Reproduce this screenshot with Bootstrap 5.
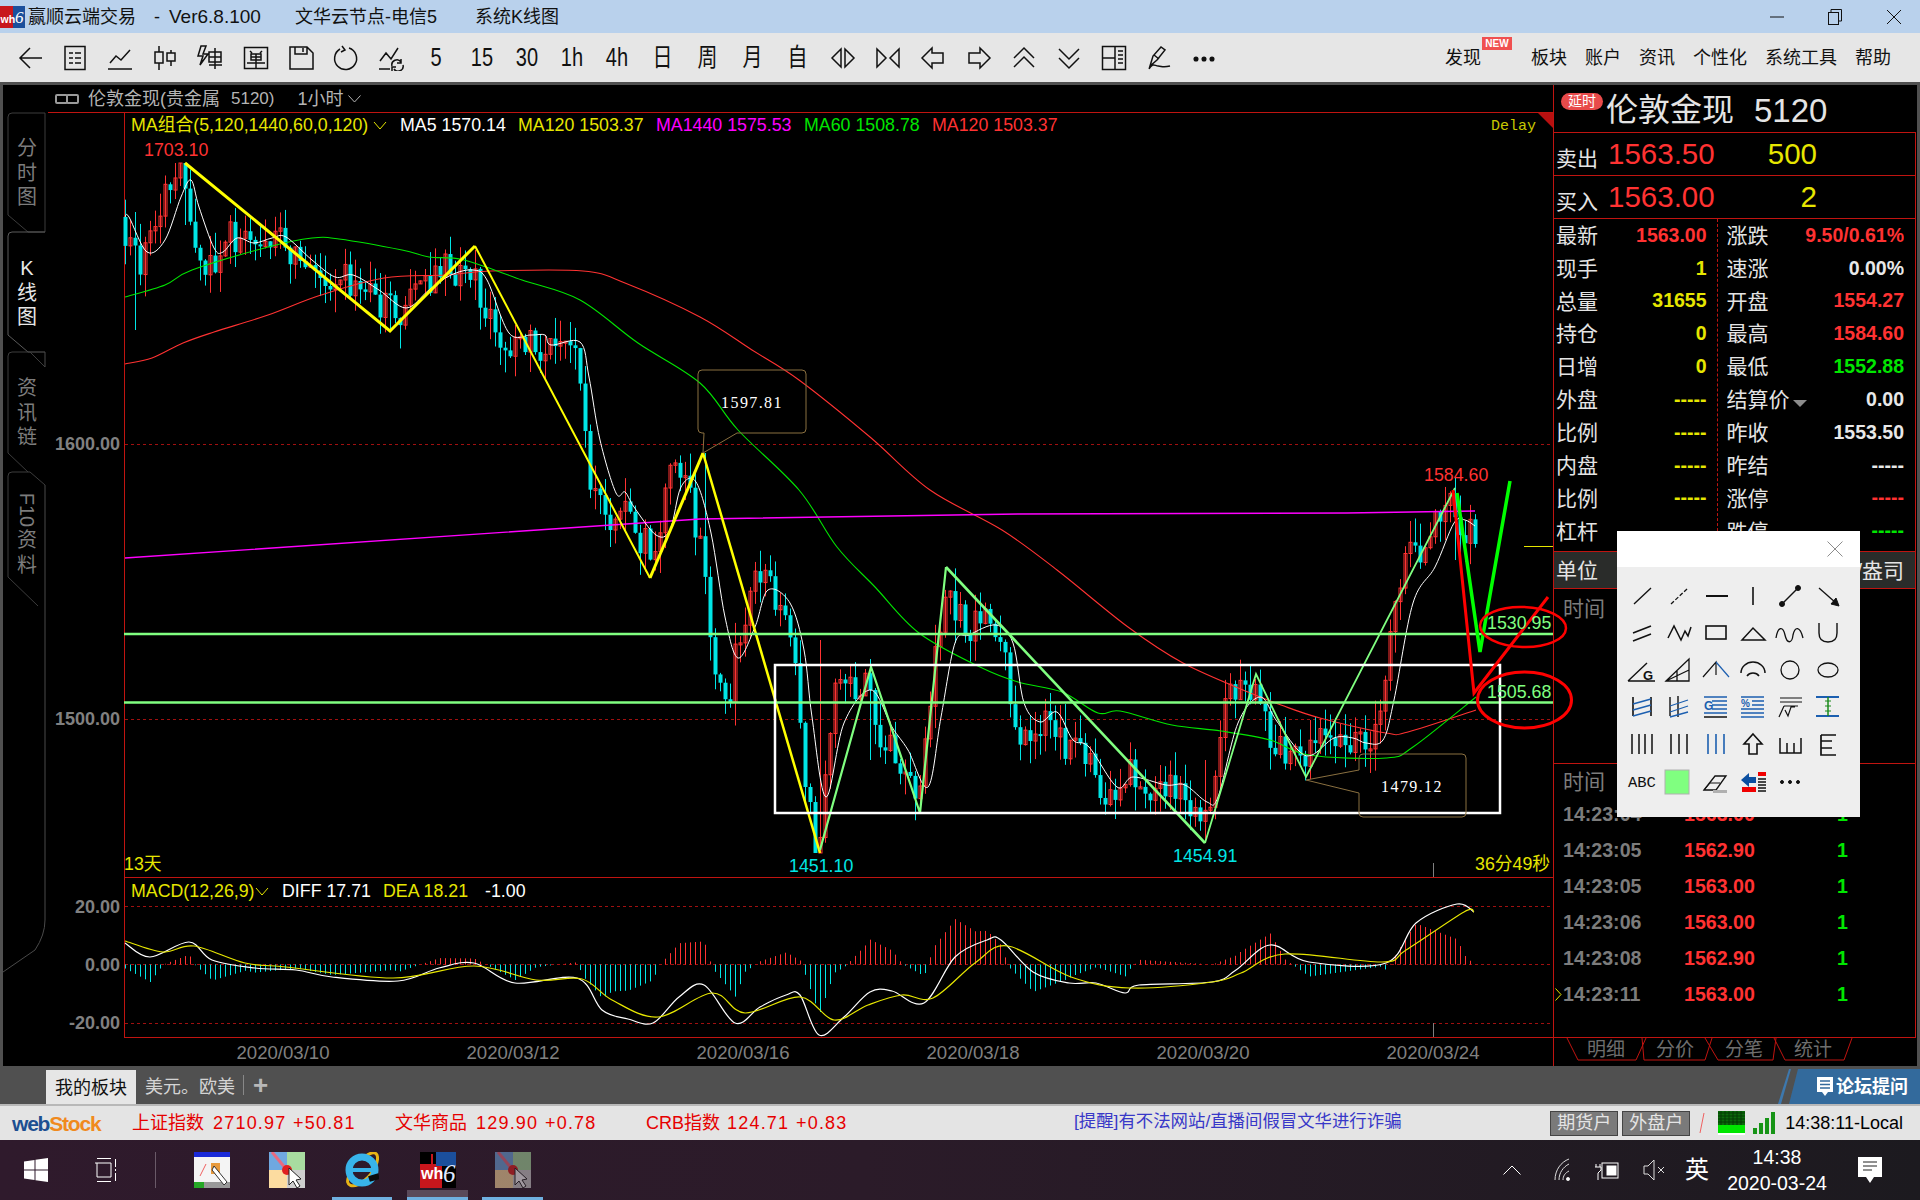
<!doctype html>
<html lang="zh-CN">
<head>
  <meta charset="utf-8" />
  <meta name="viewport" content="width=device-width, initial-scale=1" />
  <title>赢顺云端交易</title>
  <link href="https://cdn.jsdelivr.net/npm/bootstrap@5.3.6/dist/css/bootstrap.min.css" rel="stylesheet" />
  <style>
    body {
      width: 1920px;
      height: 1200px;
      overflow: hidden;
      background: #505050;
      font-family: "Liberation Sans", "Noto Sans CJK SC", sans-serif;
      font-size: 18px;
      line-height: 1;
    }
    svg { display: block; }

    /* title bar and toolbar */
    .title-bar { height: 33px; background: #b9d1ec; color: #111; }
    .title-bar .logo-wrap { width: 28px; }
    .tool-bar { height: 49px; background: #e6e6e6; color: #111; padding-left: 7px; }
    .tb-slot { width: 45.2px; display: flex; justify-content: center; align-items: center; font-size: 25px; }
    .tb-slot span { display: inline-block; transform: scaleX(.8); }
    .menu-side { gap: 18px; padding-right: 29px; }
    .new-tag { position: absolute; left: 37px; top: -12px; width: 30px; height: 13px; background: #f05050; color: #fff; font-size: 10px; font-weight: 700; text-align: center; line-height: 13px; }
    .gray-gap { height: 3px; background: #505050; }

    /* main area */
    .work-area { height: 981px; background: #000; border-left: 3px solid #505050; border-right: 3px solid #505050; }
    .side-rail { width: 45px; flex: none; }
    .chart-col { width: 1505px; flex: none; position: relative; z-index: 2; }
    .chart-head { height: 27px; color: #b4b4b4; padding-left: 7px; font-size: 18px; }
    .chart-svg { overflow: visible; }
    .chart-svg text { font-family: "Liberation Sans", "Noto Sans CJK SC", sans-serif; dominant-baseline: central; }
    .tx-ma { font-size: 17.8px; }
    .tx-axis { font-size: 18px; font-weight: 700; }
    .tx-date { font-size: 18.6px; }
    .tx-mono { font-family: "Liberation Mono", monospace !important; font-size: 15px; }
    .tx-call { font-family: "Liberation Serif", serif !important; font-size: 16px; letter-spacing: 1.4px; }

    /* quote panel */
    .quote-panel { width: 364px; flex: none; position: relative; border-left: 1px solid #c01410; color: #e4e4e4; }
    .qp-head { height: 47px; padding: 3px 0 0 7px; }
    .delay-tag { width: 42px; height: 17px; border-radius: 9px; background: #e84a4a; color: #fff; font-size: 14px; text-align: center; line-height: 17px; margin-top: -17px; }
    .qp-name { font-size: 32px; margin-left: 3px; }
    .qp-code { font-size: 33px; margin-left: 20px; }
    .qp-sec { width: 362px; border-right: 1px solid #c01410; border-top: 1px solid #c01410; }
    .qp-quote { height: 43px; padding-left: 2px; }
    .qp-quote .lbl { font-size: 21px; width: 52px; margin-top: 9px; }
    .qp-quote .prc { font-size: 29.5px; width: 153px; color: #ff3232; }
    .qp-quote .vol { font-size: 29.5px; width: 56px; color: #e6e600; text-align: right; }
    .info-grid { height: 333px; }
    .info-left { width: 164px; padding: 0 10px 0 2px; border-right: 1px dashed #c01410; }
    .info-right { width: 198px; padding: 0 11px 0 9px; }
    .info-row { height: 32.85px; font-size: 21px; overflow: hidden; }
    .info-row b { font-size: 19.5px; }
    .c-red { color: #ff3232; }
    .c-yel { color: #e6e600; }
    .c-grn { color: #00e600; }
    .c-wht { color: #e8e8e8; }
    .drop-tri { width: 0; height: 0; display: inline-block; border-left: 7px solid transparent; border-right: 7px solid transparent; border-top: 7px solid #8c8c8c; margin-left: 3px; vertical-align: 0; }
    .unit-row { height: 37px; background: #2a2c2a; padding: 0 11px 0 2px; font-size: 21px; }
    .time-sec { height: 175px; color: #7c7c7c; font-size: 21px; padding: 9px 0 0 9px; }
    .tick-sec { height: 274px; }
    .tick-head { height: 33px; color: #7c7c7c; font-size: 21px; padding: 2px 0 0 9px; }
    .tick-row { height: 36px; padding-left: 9px; font-size: 19.6px; font-weight: 700; position: relative; }
    .tick-row .tm { width: 121px; color: #7c7c7c; }
    .tick-row .pr { width: 70px; color: #ff3232; }
    .tick-row .nm { width: 94px; color: #00e600; text-align: right; }
    .tick-cur { position: absolute; left: 1px; top: 11px; }
    .tab-strip { border-top: 1px solid #c01410; width: 362px; }

    /* drawing tools popup */
    .tool-pop { position: absolute; left: 63px; top: 446px; width: 243px; height: 286px; background: #eeeeee; z-index: 5; }
    .tool-pop-top { height: 36px; background: #fff; }
    .tool-grid { display: grid; grid-template-columns: repeat(6, 37.2px); grid-auto-rows: 37.2px; padding: 10px 0 0 6px; }
    .tool-grid > div { display: flex; align-items: center; justify-content: center; }

    /* bottom strips */
    .sheet-strip { height: 38px; background: #505050; color: #d4d4d4; padding-left: 46px; }
    .sheet-on { width: 90px; height: 34px; margin-top: 4px; background: #e6e6e6; color: #111; text-align: center; line-height: 37px; }
    .sheet-off { margin-left: 9px; margin-top: 4px; padding-top: 4px; }
    .sheet-sep { width: 1px; height: 20px; background: #888; margin: 9px 0 0 8px; }
    .sheet-plus { color: #b8b8b8; font-size: 26px; font-weight: 700; margin: 6px 0 0 9px; }
    .forum-sliver { width: 14px; height: 35px; margin-top: 3px; margin-right: -3px; background: #3d78ae; clip-path: polygon(11px 0, 13px 0, 3px 100%, 0 100%); }
    .forum-chip { width: 131px; height: 35px; margin-top: 3px; background: #336a9c; clip-path: polygon(9px 0, 100% 0, 100% 100%, 0 100%); color: #fff; padding-left: 28px; gap: 3px; font-weight: 700; }
    .status-bar { height: 36px; border-top: 2px solid #b8b8b8; background: #e4e4e4; position: relative; }
    .stock-logo { padding-left: 12px; font-size: 21px; font-weight: 700; letter-spacing: -1.2px; }
    .idx { color: #e60000; font-size: 18px; }
    .idx-num { letter-spacing: 1.2px; }
    .notice { color: #3838c8; font-size: 17.4px; margin-left: 1074px; margin-top: -3px; }
    .st-btn { height: 25px; background: #7a7a7a; border: 1px solid #444; color: #e4e4e4; font-size: 18px; line-height: 23px; text-align: center; }
    .clock-local { font-size: 18px; color: #000; }
    .task-bar { height: 60px; background: linear-gradient(90deg, #2f1a2c 0%, #2b1b29 45%, #1c1a1f 100%); color: #fff; position: relative; }
    .tray-time { width: 110px; text-align: center; font-size: 19.5px; line-height: 26px; }
    .run-mark { position: absolute; bottom: 0; height: 3px; background: #6fb0e0; }
    .run-glow { position: absolute; bottom: 3px; left: 407px; width: 61px; height: 7px; background: #5a4a5a; }
  </style>
</head>
<body>
  <div class="title-bar d-flex align-items-center">
    <div class="logo-wrap">
      <svg width="25" height="22" viewBox="0 0 25 22"><rect width="13" height="22" fill="#c8161c"/><rect x="13" width="12" height="22" fill="#1b4f9c"/><text x=".5" y="17" font-size="10.5" font-weight="700" fill="#fff" font-family="Liberation Sans">wh</text><text x="15" y="17" font-size="17" font-style="italic" fill="#fff" font-family="Liberation Serif">6</text></svg>
    </div>
    <span>赢顺云端交易</span><span style="margin-left:18px">-</span><span style="margin-left:9px;font-size:19px">Ver6.8.100</span>
    <span style="margin-left:34px">文华云节点-电信5</span><span style="margin-left:38px">系统K线图</span>
    <div class="d-flex align-items-center ms-auto" style="padding-right:18px;gap:44px">
      <svg width="14" height="14" viewBox="0 0 14 14"><path d="M0 7H14" stroke="#111"/></svg>
      <svg width="14" height="16" viewBox="0 0 14 16" fill="none" stroke="#111"><rect x=".5" y="3.5" width="10" height="12"/><path d="M3 3V.5H13.5V12H11"/></svg>
      <svg width="16" height="16" viewBox="0 0 16 16" stroke="#111"><path d="M1 1L15 15M15 1L1 15"/></svg>
    </div>
  </div>

  <div class="tool-bar d-flex align-items-center">
    <div class="d-flex align-items-center" id="toolSlots"></div>
    <div class="menu-side d-flex align-items-center ms-auto">
      <span class="position-relative" style="margin-right:32px">发现<span class="new-tag">NEW</span></span>
      <span>板块</span><span>账户</span><span>资讯</span><span>个性化</span><span>系统工具</span><span>帮助</span>
    </div>
  </div>
  <div class="gray-gap"></div>

  <div class="work-area d-flex">
    <div class="side-rail">
      <svg width="45" height="981" viewBox="3 85 45 981" fill="none">
        <path d="M45 232H28L8 215V117Q8 113 12 113H45V232" stroke="#3c3c3c"/>
        <path d="M45 232H12Q8 232 8 236V335L28 352H45" stroke="#5a5a5a"/>
        <path d="M45 367L30 352H12Q8 352 8 356V453L28 472" stroke="#3c3c3c"/>
        <path d="M45 485L30 472H12Q8 472 8 476V577L38 606" stroke="#3c3c3c"/>
        <path d="M45 367V352M45 485V920Q45 935 35 950L3 972" stroke="#4a4a4a"/>
        <g font-size="20" font-family="Liberation Sans, Noto Sans CJK SC, sans-serif" text-anchor="middle" dominant-baseline="central" fill="#7c7c7c">
          <text x="27" y="148">分</text><text x="27" y="173">时</text><text x="27" y="197">图</text>
          <g fill="#e8e8e8"><text x="27" y="268">K</text><text x="27" y="293">线</text><text x="27" y="317">图</text></g>
          <text x="27" y="388">资</text><text x="27" y="413">讯</text><text x="27" y="437">链</text>
          <text x="27" y="510" transform="rotate(90 27 510)">F10</text><text x="27" y="540">资</text><text x="27" y="565">料</text>
        </g>
      </svg>
    </div>

    <div class="chart-col">
      <div class="chart-head d-flex align-items-center">
        <svg width="24" height="10" viewBox="0 0 24 10" fill="none" stroke="#9a9a9a" stroke-width="2"><rect x="1" y="1" width="11" height="8" rx="1"/><rect x="12" y="1" width="11" height="8" rx="1"/></svg>
        <span style="margin-left:9px">伦敦金现(贵金属</span><span style="margin-left:11px;font-size:17px">5120)</span>
        <span style="margin-left:23px">1小时</span>
        <svg class="ms-1" width="13" height="8" viewBox="0 0 13 8" fill="none" stroke="#b4b4b4"><path d="M.5 .5L6.5 7L12.5 .5"/></svg>
      </div>
      <svg class="chart-svg" id="chart" width="1505" height="954" viewBox="48 112 1505 954"></svg>
    </div>

    <div class="quote-panel">
      <div class="qp-head d-flex align-items-center">
        <span class="delay-tag">延时</span><span class="qp-name">伦敦金现</span><span class="qp-code">5120</span>
      </div>
      <div class="qp-sec qp-quote d-flex align-items-center"><span class="lbl">卖出</span><span class="prc">1563.50</span><span class="vol">500</span></div>
      <div class="qp-sec qp-quote d-flex align-items-center"><span class="lbl">买入</span><span class="prc">1563.00</span><span class="vol">2</span></div>
      <div class="qp-sec info-grid d-flex">
        <div class="info-left" id="infoLeft"></div>
        <div class="info-right" id="infoRight"></div>
      </div>
      <div class="qp-sec unit-row d-flex align-items-center justify-content-between"><span>单位</span><span>美元/盎司</span></div>
      <div class="qp-sec time-sec">时间</div>
      <div class="qp-sec tick-sec" id="tickSec"></div>
      <div class="tab-strip">
        <svg width="362" height="29" viewBox="1554 1037 362 29" fill="none">
          <g stroke="#c01410">
            <path d="M1567 1037L1578 1059H1636L1646 1037"/>
            <path d="M1642 1037L1644 1059H1705L1712 1037"/>
            <path d="M1705 1037L1718 1059H1773L1776 1037"/>
            <path d="M1774 1037L1785 1059H1844L1852 1037"/>
          </g>
          <g font-size="19" fill="#6e6e6e" text-anchor="middle" dominant-baseline="central" font-family="Liberation Sans, Noto Sans CJK SC, sans-serif">
            <text x="1606" y="1048">明细</text><text x="1675" y="1048">分价</text><text x="1744" y="1048">分笔</text><text x="1813" y="1048">统计</text>
          </g>
        </svg>
      </div>

      <div class="tool-pop">
        <div class="tool-pop-top d-flex justify-content-end align-items-center" style="padding-right:17px">
          <svg width="16" height="16" viewBox="0 0 16 16" stroke="#8c8c8c"><path d="M.5 .5L15.5 15.5M15.5 .5L.5 15.5"/></svg>
        </div>
        <div class="tool-grid" id="toolGrid"></div>
      </div>
    </div>
  </div>

  <div class="sheet-strip d-flex">
    <div class="sheet-on">我的板块</div>
    <div class="sheet-off d-flex align-items-center" style="height:30px">美元。欧美</div>
    <div class="sheet-sep"></div>
    <div class="sheet-plus">+</div>
    <div class="forum-sliver ms-auto"></div>
    <div class="forum-chip d-flex align-items-center">
      <svg width="16" height="20" viewBox="0 0 16 20"><path d="M0 0H16V15H11L8 19L5 15H0Z" fill="#fff"/><path d="M3 4H13M3 7.5H13M3 11H13" stroke="#336a9c" stroke-width="1.3"/></svg>
      <span>论坛提问</span>
    </div>
  </div>

  <div class="status-bar d-flex align-items-center">
    <div class="stock-logo" style="position:absolute;left:0"><span style="color:#1d4f91">web</span><span style="color:#f08a1d">Stock</span></div>
    <div class="idx" style="position:absolute;left:132px">上证指数</div>
    <div class="idx idx-num" style="position:absolute;left:213px">2710.97</div>
    <div class="idx idx-num" style="position:absolute;left:293px">+50.81</div>
    <div class="idx" style="position:absolute;left:395px">文华商品</div>
    <div class="idx idx-num" style="position:absolute;left:476px">129.90</div>
    <div class="idx idx-num" style="position:absolute;left:545px">+0.78</div>
    <div class="idx" style="position:absolute;left:646px">CRB指数</div>
    <div class="idx idx-num" style="position:absolute;left:727px">124.71</div>
    <div class="idx idx-num" style="position:absolute;left:796px">+0.83</div>
    <div class="notice">[提醒]有不法网站/直播间假冒文华进行诈骗</div>
    <div class="d-flex align-items-center ms-auto" style="padding-right:17px">
      <div class="st-btn" style="width:68px">期货户</div>
      <div class="st-btn" style="width:68px;margin-left:4px">外盘户</div>
      <svg class="ms-2" width="8" height="22" viewBox="0 0 8 22"><path d="M6 1L2 21" stroke="#f06060"/></svg>
      <svg style="margin-left:12px" width="27" height="24" viewBox="0 0 27 24"><rect width="27" height="24" fill="#fff"/><rect width="27" height="22" fill="#0a6a0a"/><rect y="14" width="27" height="8" fill="#00e600"/><path d="M0 2H27M0 5H27M0 8H27M0 11H27M3 0V14M7 0V14M11 0V14M15 0V14M19 0V14M23 0V14" stroke="#043a04"/></svg>
      <svg style="margin-left:8px" width="23" height="22" viewBox="0 0 23 22" fill="#169416"><rect y="16" width="4" height="6"/><rect x="6" y="11" width="4" height="11"/><rect x="12" y="6" width="4" height="16"/><rect x="18" width="4" height="22"/></svg>
      <span class="clock-local" style="margin-left:9px">14:38:11-Local</span>
    </div>
  </div>

  <div class="task-bar d-flex align-items-center" id="taskBar">
    <svg style="margin-left:24px" width="24" height="24" viewBox="0 0 24 24" fill="#fff"><path d="M0 3.5L10.5 2V11.5H0ZM11.5 1.8L24 0V11.5H11.5ZM0 12.5H10.5V22L0 20.5ZM11.5 12.5H24V24L11.5 22.2Z"/></svg>
    <svg style="margin-left:47px" width="24" height="24" viewBox="0 0 24 24" fill="none" stroke="#fff"><path d="M2 .5H16M2 23.5H16M2 5V19M2 5H16V19H2M2 5H0M20.5 1V9M20.5 11V13M20.5 15V23"/></svg>
    <svg style="margin-left:36px" width="1" height="36" viewBox="0 0 1 36"><path d="M.5 0V36" stroke="#6a5a68"/></svg>
    <!-- app 1 -->
    <svg style="margin-left:38px" width="36" height="36" viewBox="0 0 36 36"><rect width="36" height="34" fill="#f4f4f4"/><rect width="36" height="5" fill="#1a2ad8"/><rect x="0" y="30" width="36" height="6" fill="#999"/><rect x="0" y="30" width="10" height="6" fill="#26a826"/><path d="M6 24L12 12" stroke="#f06060"/><rect x="17" y="11" width="9" height="11" fill="#e89a3c"/><path d="M20 14L33 30L30 33L18 18Z" fill="#fff" stroke="#333"/></svg>
    <!-- app 2 -->
    <svg style="margin-left:39px" width="36" height="36" viewBox="0 0 36 36"><rect width="18" height="18" fill="#6fa8e0"/><rect x="18" width="18" height="18" fill="#a8dca0"/><rect y="18" width="18" height="18" fill="#fcdca0"/><rect x="18" y="18" width="18" height="18" fill="#cfcfcf"/><path d="M3 0L17 17" stroke="#e86a80" stroke-width="3"/><circle cx="18" cy="18" r="5" fill="#e02020"/><path d="M20 16V33L24 29L28 36L31 34L27 28L32 27Z" fill="#fff" stroke="#222"/></svg>
    <!-- IE -->
    <svg style="margin-left:40px" width="34" height="36" viewBox="0 0 34 36" fill="none"><path d="M4 24C-1 34 8 38 20 28C30 20 34 8 32 3C30 -1 24 1 20 5" stroke="#e8b416" stroke-width="3"/><ellipse cx="17" cy="18" rx="13" ry="13" stroke="#38b4ea" stroke-width="7"/><path d="M7 18H27" stroke="#38b4ea" stroke-width="4"/><path d="M24 27L34 24" stroke="#0c0c0c" stroke-width="6"/></svg>
    <!-- wh6 -->
    <svg style="margin-left:41px" width="36" height="36" viewBox="0 0 36 36"><rect width="36" height="36" fill="#000"/><rect y="12" width="22" height="24" fill="#c8161c"/><rect x="16" width="20" height="14" fill="#1b4f9c"/><path d="M12 2V12" stroke="#c8161c" stroke-width="2"/><text x="1" y="27" font-size="16" font-weight="700" fill="#fff" font-family="Liberation Sans">wh</text><text x="23" y="30" font-size="25" font-style="italic" fill="#dfe8ff" font-family="Liberation Serif">6</text></svg>
    <!-- app 2 again, dimmed -->
    <svg style="margin-left:39px;opacity:.55" width="36" height="36" viewBox="0 0 36 36"><rect width="18" height="18" fill="#6fa8e0"/><rect x="18" width="18" height="18" fill="#a8dca0"/><rect y="18" width="18" height="18" fill="#fcdca0"/><rect x="18" y="18" width="18" height="18" fill="#cfcfcf"/><path d="M3 0L17 17" stroke="#e86a80" stroke-width="3"/><circle cx="18" cy="18" r="5" fill="#e02020"/><path d="M20 16V33L24 29L28 36L31 34L27 28L32 27Z" fill="#fff" stroke="#222"/></svg>
    <div class="d-flex align-items-center ms-auto">
      <svg width="18" height="10" viewBox="0 0 18 10" fill="none" stroke="#fff"><path d="M.5 9.5L9 1L17.5 9.5"/></svg>
      <svg style="margin-left:32px" width="18" height="24" viewBox="0 0 18 24" fill="none" stroke="#ddd"><path d="M2 22C2 12 8 4 16 1M6 22C6 15 10 9 16 6M10 22C10 18 12 15 16 13"/><circle cx="15" cy="21" r="1.6" fill="#fff"/></svg>
      <svg style="margin-left:24px" width="24" height="20" viewBox="0 0 24 20" fill="none" stroke="#fff"><rect x="7" y="3" width="16" height="15"/><rect x="12" y="6" width="9" height="9" fill="#fff"/><path d="M1 4V7M5 4V7M0 7H6V10L3 13V20"/></svg>
      <svg style="margin-left:24px" width="22" height="24" viewBox="0 0 22 24" fill="none" stroke="#ddd"><path d="M1 8H5L11 2V22L5 16H1Z"/><path d="M15 9L21 15M21 9L15 15"/></svg>
      <span style="margin-left:20px;font-size:24px;color:#fff">英</span>
      <div class="tray-time" style="margin-left:13px"><div>14:38</div><div>2020-03-24</div></div>
      <svg style="margin-left:26px;margin-right:38px" width="24" height="26" viewBox="0 0 24 26"><path d="M0 0H24V20H16L12 26L8 20H0Z" fill="#fff"/><path d="M5 5H19M5 9H19M5 13H14" stroke="#222"/></svg>
    </div>
    <div class="run-glow"></div>
    <div class="run-mark" style="left:332px;width:60px"></div>
    <div class="run-mark" style="left:407px;width:61px"></div>
    <div class="run-mark" style="left:482px;width:61px"></div>
  </div>

  <script>
    // toolbar icons
    const toolbar = [
      '<path d="M13 3L3 13L13 23M3 13H25"/>',
      '<rect x="3" y="1.5" width="20" height="23"/><path d="M7 8H11M13 8H19M7 13H11M13 13H19M7 18H11M13 18H19"/>',
      '<path d="M1 24H25M3 18L9 11L14 15L23 5"/>',
      '<path d="M7 1V25M19 5V21"/><rect x="3" y="7" width="8" height="11" fill="#e6e6e6"/><rect x="15" y="8" width="8" height="8" fill="#e6e6e6"/>',
      '<path d="M9 1H4L1 11H6L3 20L11 9H6ZM12 7H24V17H12ZM18 3V24M12 12H24M12 20H25"/>',
      '<rect x="1.5" y="2.5" width="23" height="21"/><path d="M7 6L9 8M19 6L17 8M8 9H18V15H8ZM8 12H18M4 18H22M13 9V23"/>',
      '<path d="M2 2H19L25 8V24H2ZM7 2V9H19V2M15 3V7"/>',
      '<path d="M16 3A11 11 0 1 1 7 4M9 1L12 5L8 7"/>',
      '<path d="M1 24H12M2 16L8 8L13 14L20 3M14 21A5 5 0 0 1 23 17M25 20A5 5 0 0 1 16 24M23 14V18H19M14 26V22H18"/>',
      '5', '15', '30', '1h', '4h', '日', '周', '月', '自',
      '<path d="M11 4L2 13L11 22ZM15 4L24 13L15 22Z"/>',
      '<path d="M2 4L11 13L2 22ZM24 4L15 13L24 22Z"/>',
      '<path d="M12 3L2 13L12 23V18H23V8H12Z"/>',
      '<path d="M14 3L24 13L14 23V18H3V8H14Z"/>',
      '<path d="M3 13L13 3L23 13M3 22L13 12L23 22"/>',
      '<path d="M3 4L13 14L23 4M3 13L13 23L23 13"/>',
      '<rect x="1.5" y="1.5" width="23" height="23"/><path d="M1.5 13H14M14 1.5V24.5M17 6H22M17 10H22M17 14H22M17 18H22"/>',
      '<path d="M4 21L7 11L15 2L19 5L11 15L4 21ZM8 10L13 14M3 24C7 17 9 21 12 21C16 21 16 23 24 21"/>',
      '<circle cx="5" cy="14" r="1.8" fill="#111"/><circle cx="13" cy="14" r="1.8" fill="#111"/><circle cx="21" cy="14" r="1.8" fill="#111"/>'
    ];
    document.getElementById('toolSlots').innerHTML = toolbar.map(t =>
      t.charAt(0) === '<'
        ? `<div class="tb-slot"><svg width="26" height="26" viewBox="0 0 26 26" fill="none" stroke="#111" stroke-width="1.5">${t}</svg></div>`
        : `<div class="tb-slot"><span>${t}</span></div>`
    ).join('');

    // quote table
    const leftRows = [['最新','1563.00','c-red'],['现手','1','c-yel'],['总量','31655','c-yel'],['持仓','0','c-yel'],['日增','0','c-yel'],['外盘','-----','c-yel'],['比例','-----','c-yel'],['内盘','-----','c-yel'],['比例','-----','c-yel'],['杠杆','','c-yel']];
    const rightRows = [['涨跌','9.50/0.61%','c-red'],['速涨','0.00%','c-wht'],['开盘','1554.27','c-red'],['最高','1584.60','c-red'],['最低','1552.88','c-grn'],['结算价<span class="drop-tri"></span>','0.00','c-wht'],['昨收','1553.50','c-wht'],['昨结','-----','c-wht'],['涨停','-----','c-red'],['跌停','-----','c-grn']];
    const rowHtml = r => `<div class="info-row d-flex align-items-center justify-content-between"><span>${r[0]}</span><b class="${r[2]}">${r[1]}</b></div>`;
    document.getElementById('infoLeft').innerHTML = leftRows.map(rowHtml).join('');
    document.getElementById('infoRight').innerHTML = rightRows.map(rowHtml).join('');

    const ticks = [['14:23:04','1563.00'],['14:23:05','1562.90'],['14:23:05','1563.00'],['14:23:06','1563.00'],['14:23:08','1562.90'],['14:23:11','1563.00']];
    document.getElementById('tickSec').innerHTML = '<div class="tick-head d-flex align-items-center">时间</div>' + ticks.map((t, i) =>
      `<div class="tick-row d-flex align-items-center">${i === 5 ? '<svg class="tick-cur" width="7" height="13" viewBox="0 0 7 13" fill="none" stroke="#e6e600"><path d="M.5 .5L6 6.5L.5 12.5"/></svg>' : ''}<span class="tm">${t[0]}</span><span class="pr">${t[1]}</span><span class="nm">1</span></div>`
    ).join('');

    // drawing tools, six per row
    const B = '#1c5fb0', G = '#1a8a1a';
    const tools = [
      '<path d="M7 23L24 7" stroke-width="1.3"/>',
      '<path d="M7 23L24 7" stroke-dasharray="4 2" stroke-width="1.3"/>',
      '<path d="M5 15H27" stroke-width="2"/>',
      '<path d="M15 6V24" stroke-width="1.6"/>',
      '<path d="M7 23L23 7" stroke-width="1.5"/><circle cx="7" cy="23" r="2.5" fill="#111"/><circle cx="23" cy="7" r="2.5" fill="#111"/>',
      '<path d="M6 7L23 22" stroke-width="1.3"/><path d="M26 25L23 17L18 23Z" fill="#111"/>',

      '<path d="M6 15L24 8M6 23L24 16" stroke-width="1.6"/>',
      '<path d="M4 20L10 8L17 22L21 13L24 18L27 9" stroke-width="1.5"/>',
      '<rect x="5" y="8" width="20" height="13" stroke-width="1.6"/>',
      '<path d="M4 22L15 10L27 22Z" stroke-width="1.5"/>',
      '<path d="M1 20C3 8 8 8 10 17C12 26 17 26 18 17C20 8 25 8 28 20" stroke-width="1.3"/>',
      '<path d="M6 5V15Q6 24 15 24Q24 24 24 15V5" stroke-width="1.4"/>',

      '<path d="M1 26L20 8M1 26H28" stroke-width="1.4"/><text x="16" y="25" font-size="13" font-weight="700" fill="#111" stroke="none" font-family="Liberation Sans">G</text>',
      '<path d="M2 26L25 4V26ZM2 26L25 15M13 16V26" stroke-width="1.3"/>',
      `<path d="M2 22L15 7V20" stroke-width="1.2"/><path d="M15 7L28 22" stroke="${B}" stroke-width="1.2"/>`,
      '<path d="M3 18A12 11 0 0 1 27 18M9 21A7 6 0 0 1 21 21" stroke-width="1.5"/>',
      '<circle cx="15" cy="15" r="9" stroke-width="1.3"/>',
      '<ellipse cx="15" cy="15" rx="10" ry="7" stroke-width="1.3"/>',

      `<path d="M6 5V24M24 5V24" stroke-width="1.6"/><path d="M6 12L24 7M6 18L24 13M6 24L24 19" stroke="${B}" stroke-width="1.6"/>`,
      `<path d="M6 5V24M14 4V25" stroke-width="1.4"/><path d="M6 14L24 8M6 20L24 14M6 25L24 20" stroke="${B}" stroke-width="1.3"/>`,
      `<path d="M3 5H26M11 9H26M11 13H26M11 17H26M3 21H26" stroke="${B}" stroke-width="1.5"/><path d="M3 25H26" stroke="#111" stroke-width="1.5"/><text x="3" y="18" font-size="12" font-weight="700" fill="${B}" stroke="none" font-family="Liberation Sans">G</text>`,
      `<path d="M3 5H26M14 9H26M14 13H26M3 17H26M3 21H26" stroke="${B}" stroke-width="1.5"/><path d="M3 25H26" stroke-width="1.5" stroke="${B}"/><text x="3" y="15" font-size="10" font-weight="700" fill="${B}" stroke="none" font-family="Liberation Sans">%</text>`,
      '<path d="M5 6H27M5 10H27M9 14H23M4 25L9 14M10 18L13 24L16 15L20 15" stroke-width="1.2"/>',
      `<path d="M3 5H26M3 24H26" stroke="${B}" stroke-width="1.8"/><path d="M15 5V24" stroke="${G}" stroke-width="1.5"/><path d="M12 9H18M12 14H18M12 19H18" stroke="${G}"/>`,

      '<path d="M5 5V25M12 5V25M18 5V25M25 5V25" stroke-width="1.5"/>',
      '<path d="M7 5V25M15 5V25M23 5V25" stroke-width="1.5"/>',
      `<path d="M7 5V25M15 5V25M23 5V25" stroke="${B}" stroke-width="1.6"/>`,
      '<path d="M15 5L24 15H19V25H11V15H6Z" stroke-width="1.6"/>',
      '<path d="M5 9V24H26V9M12 14V24M19 14V24" stroke-width="1.5"/>',
      '<path d="M8 6H23M8 6V26H23M8 12H19M8 19H19" stroke-width="1.7"/>',

      '<text x="1" y="20" font-size="15.5" fill="#111" stroke="none" font-family="Liberation Mono">ABC</text>',
      '<rect x="1" y="3" width="24" height="24" fill="#80ff80" stroke="#b0b0b0"/>',
      '<path d="M3 23L14 9H25L15 23Z" stroke-width="1.3"/><path d="M3 23L9 16H19"/><rect x="12" y="23" width="14" height="3" fill="#b0b0b0" stroke="none"/>',
      `<path d="M3 13L11 6V10H18V16H11V20Z" fill="#0b4fa0" stroke="none"/><rect x="4" y="20" width="14" height="5" fill="#f00000" stroke="none"/><rect x="20" y="5" width="8" height="4" fill="#f00000" stroke="none"/><path d="M20 12H28M20 15H28M20 18H28M20 21H28M20 24H28" stroke-width="1.3"/>`,
      '<circle cx="7" cy="15" r="1.5" fill="#111"/><circle cx="15" cy="15" r="1.5" fill="#111"/><circle cx="23" cy="15" r="1.5" fill="#111"/>',
      ''
    ];
    document.getElementById('toolGrid').innerHTML = tools.map(t =>
      `<div><svg width="30" height="30" viewBox="0 0 30 30" fill="none" stroke="#111">${t}</svg></div>`
    ).join('');

    // chart data, read off as page x / y
    const ma5 = [[125,217],[129,217],[147,252],[165,240],[181,197],[191,180],[199,207],[214,248],[223,252],[237,238],[254,243],[272,238],[286,237],[312,260],[335,277],[353,275],[379,290],[406,308],[429,290],[451,275],[473,270],[487,280],[509,333],[531,335],[545,335],[551,345],[580,342],[589,377],[600,440],[616,493],[625,492],[634,507],[656,535],[670,530],[681,487],[696,482],[711,533],[725,617],[738,658],[755,627],[768,590],[790,603],[804,650],[812,717],[826,797],[844,723],[871,690],[892,727],[908,750],[928,787],[941,717],[955,643],[969,635],[996,625],[1013,643],[1024,703],[1040,722],[1057,712],[1073,740],[1089,747],[1117,787],[1133,777],[1166,785],[1185,785],[1207,802],[1218,797],[1238,723],[1260,697],[1276,720],[1298,750],[1312,755],[1334,738],[1353,738],[1366,743],[1383,740],[1394,700],[1413,603],[1435,567],[1454,523],[1465,520],[1475,526]];
    const ma60 = [[125,297],[165,285],[192,270],[268,247],[312,238],[339,239],[402,250],[429,257],[464,260],[522,280],[580,300],[638,343],[700,383],[738,430],[799,490],[837,547],[875,587],[919,633],[980,667],[1018,682],[1062,692],[1098,713],[1120,711],[1172,725],[1221,731],[1270,740],[1309,755],[1386,758],[1413,747],[1476,697]];
    const ma120 = [[125,364],[152,358],[183,343],[214,332],[268,315],[321,295],[384,278],[446,275],[491,271],[583,271],[625,283],[700,317],[752,350],[799,380],[870,437],[930,490],[1002,530],[1057,570],[1128,627],[1183,663],[1248,692],[1281,705],[1320,718],[1386,733],[1408,732],[1476,710]];
    const ma1440 = [[125,558],[700,519],[1018,514],[1347,513],[1475,511]];
    const diff = [[125,943],[150,957],[189,942],[212,960],[255,968],[296,970],[332,977],[398,981],[439,968],[474,963],[515,983],[577,978],[602,1010],[628,1019],[653,1023],[679,997],[704,985],[735,1023],[760,1007],[786,995],[800,995],[819,1035],[844,1017],[870,992],[892,991],[924,1003],[955,957],[987,940],[1001,940],[1033,972],[1069,983],[1096,983],[1125,993],[1139,985],[1212,982],[1236,970],[1270,945],[1309,962],[1386,963],[1416,923],[1457,904],[1474,912]];
    const dea = [[125,941],[163,952],[194,946],[245,963],[286,967],[393,978],[474,966],[536,980],[582,979],[612,1000],[658,1017],[712,993],[745,1013],[800,997],[834,1020],[868,1005],[902,995],[933,998],[975,963],[1008,946],[1071,977],[1130,988],[1212,982],[1241,973],[1285,954],[1382,962],[1406,950],[1464,912],[1474,912]];

    function yAt(pts, x) {
      if (x <= pts[0][0]) return pts[0][1];
      for (let i = 1; i < pts.length; i++) {
        if (x <= pts[i][0]) {
          const k = (x - pts[i - 1][0]) / (pts[i][0] - pts[i - 1][0]);
          return pts[i - 1][1] + (pts[i][1] - pts[i - 1][1]) * k;
        }
      }
      return pts[pts.length - 1][1];
    }
    let seed = 20200324;
    function rnd() {
      seed = (seed * 1664525 + 1013904223) % 4294967296;
      return seed / 4294967296;
    }
    const RED = '#ff3232', CYAN = '#00e6e6', YEL = '#ffff00', LG = '#80ff80';
    let svg = '';
    const line = (pts, color, w) => `<polyline points="${pts.map(p => p.join(',')).join(' ')}" fill="none" stroke="${color}" stroke-width="${w}"/>`;
    // same points, rounded off for the moving averages
    function curve(pts, color, w) {
      let d = `M${pts[0][0]} ${pts[0][1]}`;
      for (let i = 0; i < pts.length - 1; i++) {
        const p0 = pts[i - 1] || pts[i], p1 = pts[i], p2 = pts[i + 1], p3 = pts[i + 2] || p2;
        d += `C${p1[0] + (p2[0] - p0[0]) / 6} ${p1[1] + (p2[1] - p0[1]) / 6} ${p2[0] - (p3[0] - p1[0]) / 6} ${p2[1] - (p3[1] - p1[1]) / 6} ${p2[0]} ${p2[1]}`;
      }
      return `<path d="${d}" fill="none" stroke="${color}" stroke-width="${w}"/>`;
    }
    const seg = (x1, y1, x2, y2, color, extra) => `<path d="M${x1} ${y1}L${x2} ${y2}" stroke="${color}" fill="none" ${extra || ''}/>`;
    const txt = (x, y, s, color, cls, anchor) => `<text x="${x}" y="${y}" fill="${color}" class="${cls || ''}" text-anchor="${anchor || 'start'}">${s}</text>`;

    // frame
    const FR = '#c01410';
    svg += seg(48, 112.5, 1553, 112.5, FR);
    svg += seg(124.5, 112, 124.5, 1037, FR);
    svg += seg(124, 877.5, 1553, 877.5, FR);
    svg += seg(124, 1037.5, 1553, 1037.5, FR);
    svg += `<polygon points="1538,113 1553,113 1553,128" fill="#b81010"/>`;
    const dash = 'stroke-dasharray="3 3"';
    [444.5, 719.5, 906.5, 964.5, 1023.5].forEach(y => { svg += seg(125, y, 1553, y, '#a01010', dash); });
    svg += seg(1433.5, 863, 1433.5, 877, '#808080') + seg(1433.5, 1023, 1433.5, 1037, '#808080');

    // candles
    const forced = [[135,212,330],[185,163,225],[390,285,332],[475,250,300],[703,453,560],[818,640,853],[871,668,760],[1205,760,843],[1455,488,560]];
    const clampY = y => Math.max(163, Math.min(853, y));
    let prev = yAt(ma5, 125);
    for (let i = 0; i < 271; i++) {
      const x = 125 + 5 * i;
      const a = yAt(ma5, x + 9), b = yAt(ma5, x - 9);
      const close = clampY(a + (a - b) * 0.5 + (rnd() - 0.5) * 34);
      let top = Math.min(prev, close), bot = Math.max(prev, close);
      const up = close < prev;
      const c = up ? RED : CYAN;
      let hi = top - rnd() * 24, lo = bot + rnd() * 24;
      const f = forced.find(k => Math.abs(k[0] - x) <= 2);
      if (f) { hi = Math.min(f[1], hi); lo = Math.max(f[2], lo); }
      svg += seg(x + .5, clampY(hi), x + .5, clampY(lo), c);
      if (bot - top < 2) bot = top + 2;
      svg += up
        ? `<rect x="${x - 1}" y="${top}" width="3" height="${bot - top}" fill="none" stroke="${c}" stroke-width="1"/>`
        : `<rect x="${x - 1.5}" y="${top}" width="4" height="${bot - top}" fill="${c}"/>`;
      prev = close;
    }
    svg += curve(ma120, RED, 1.1) + curve(ma60, '#00e600', 1.1) + line(ma1440, '#ff00ff', 1.4) + curve(ma5, '#ffffff', 1);

    // drawn objects
    svg += line([[185,163],[390,331],[475,246]], YEL, 3);
    svg += line([[475,246],[650,578]], YEL, 2) + line([[650,578],[703,453]], YEL, 3);
    svg += line([[703,453],[820,853]], YEL, 2.5);
    svg += line([[820,850],[871,667],[920,813],[946,567]], LG, 2.2) + line([[946,567],[1205,843]], LG, 2.6) + line([[1205,843],[1256,674],[1306,777],[1455,488]], LG, 1.8);
    svg += seg(124, 634, 1553, 634, LG, 'stroke-width="2.5"') + seg(124, 702.5, 1553, 702.5, LG, 'stroke-width="2.5"');
    svg += `<rect x="775" y="665" width="725" height="148" fill="none" stroke="#fff" stroke-width="2.5"/>`;
    svg += seg(1524, 546.5, 1553, 546.5, '#e6e600');
    const BR = '#8a7040';
    svg += `<path d="M703 453L704 433H702Q698 433 698 429V374Q698 370 702 370H802Q806 370 806 374V429Q806 433 802 433H737Z" fill="none" stroke="${BR}"/>`;
    svg += `<path d="M1306 780L1359 770V758Q1359 754 1363 754H1462Q1466 754 1466 758V813Q1466 817 1462 817H1363Q1359 817 1359 813V793Z" fill="none" stroke="${BR}"/>`;
    svg += txt(752, 402, '1597.81', '#fff', 'tx-call', 'middle') + txt(1412, 786, '1479.12', '#fff', 'tx-call', 'middle');
    svg += line([[1457,493],[1480,652],[1510,481]], '#00ff00', 3.5);
    svg += line([[1453,490],[1474,693],[1548,597]], '#ff0000', 3);
    svg += `<ellipse cx="1523" cy="627" rx="43" ry="20" fill="none" stroke="#f00" stroke-width="2.5" transform="rotate(2 1523 627)"/>`;
    svg += `<ellipse cx="1524.5" cy="700" rx="47" ry="28" fill="none" stroke="#f00" stroke-width="3"/>`;
    svg += txt(1487, 623, '1530.95', LG, 'tx-ma') + txt(1487, 692, '1505.68', LG, 'tx-ma');

    // labels
    svg += txt(131, 125, 'MA组合(5,120,1440,60,0,120)', '#e6e600', 'tx-ma');
    svg += `<path d="M374 122L380 129L386 122" fill="none" stroke="#e6e600"/>`;
    svg += txt(400, 125, 'MA5 1570.14', '#fff', 'tx-ma') + txt(518, 125, 'MA120 1503.37', '#e6e600', 'tx-ma') + txt(656, 125, 'MA1440 1575.53', '#ff00ff', 'tx-ma') + txt(804, 125, 'MA60 1508.78', '#00e600', 'tx-ma') + txt(932, 125, 'MA120 1503.37', RED, 'tx-ma');
    svg += txt(1491, 126, 'Delay', '#c8c800', 'tx-mono');
    svg += txt(144, 150, '1703.10', RED, 'tx-ma') + txt(1424, 475, '1584.60', RED, 'tx-ma');
    svg += txt(789, 866, '1451.10', CYAN, 'tx-ma') + txt(1173, 856, '1454.91', CYAN, 'tx-ma');
    svg += txt(124, 864, '13天', '#e6e600', 'tx-ma') + txt(1475, 864, '36分49秒', '#e6e600', 'tx-ma');
    svg += txt(120, 444, '1600.00', '#808080', 'tx-axis', 'end') + txt(120, 719, '1500.00', '#808080', 'tx-axis', 'end');
    svg += txt(120, 907, '20.00', '#808080', 'tx-axis', 'end') + txt(120, 965, '0.00', '#808080', 'tx-axis', 'end') + txt(120, 1023, '-20.00', '#808080', 'tx-axis', 'end');

    // MACD pane
    for (let x = 125; x <= 1475; x += 5) {
      const h = (yAt(dea, x) - yAt(diff, x)) * 2;
      if (Math.abs(h) < .6) continue;
      svg += seg(x + .5, 964.5, x + .5, 964.5 - h, h > 0 ? RED : CYAN);
    }
    svg += curve(diff, '#fff', 1.2) + curve(dea, '#e6e600', 1.2);
    svg += txt(131, 891, 'MACD(12,26,9)', '#e6e600', 'tx-ma');
    svg += `<path d="M256 888L262 895L268 888" fill="none" stroke="#e6e600"/>`;
    svg += txt(282, 891, 'DIFF 17.71', '#fff', 'tx-ma') + txt(383, 891, 'DEA 18.21', '#e6e600', 'tx-ma') + txt(485, 891, '-1.00', '#fff', 'tx-ma');
    ['2020/03/10','2020/03/12','2020/03/16','2020/03/18','2020/03/20','2020/03/24'].forEach((d, i) => {
      svg += txt(283 + 230 * i, 1052, d, '#808080', 'tx-date', 'middle');
    });
    document.getElementById('chart').innerHTML = svg;
  </script>
  <script src="https://cdn.jsdelivr.net/npm/bootstrap@5.3.6/dist/js/bootstrap.bundle.min.js"></script>
</body>
</html>
